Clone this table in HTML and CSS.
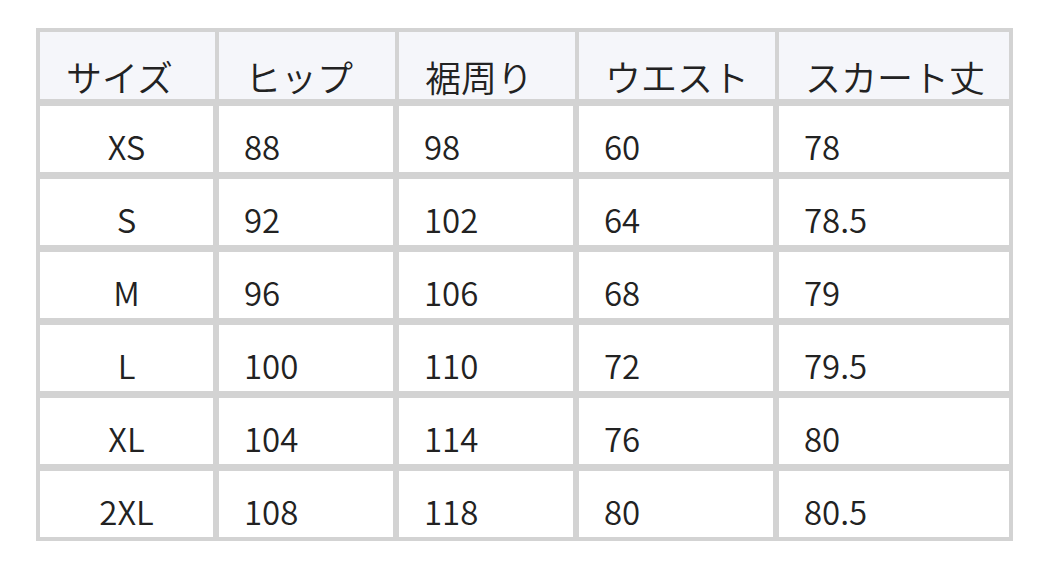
FILE: index.html
```html
<!DOCTYPE html>
<html lang="ja">
<head>
<meta charset="utf-8">
<link rel="stylesheet" href="styles.css">
</head>
<body>
<table class="size-table">
  <colgroup>
    <col class="c1"><col class="c2"><col class="c3"><col class="c4"><col class="c5">
  </colgroup>
  <thead>
    <tr><th>サイズ</th><th>ヒップ</th><th>裾周り</th><th>ウエスト</th><th>スカート丈</th></tr>
  </thead>
  <tbody>
    <tr><td class="size">XS</td><td>88</td><td>98</td><td>60</td><td>78</td></tr>
    <tr><td class="size">S</td><td>92</td><td>102</td><td>64</td><td>78.5</td></tr>
    <tr><td class="size">M</td><td>96</td><td>106</td><td>68</td><td>79</td></tr>
    <tr><td class="size">L</td><td>100</td><td>110</td><td>72</td><td>79.5</td></tr>
    <tr><td class="size">XL</td><td>104</td><td>114</td><td>76</td><td>80</td></tr>
    <tr><td class="size">2XL</td><td>108</td><td>118</td><td>80</td><td>80.5</td></tr>
  </tbody>
</table>
</body>
</html>
```

FILE: styles.css
```css
html, body {
  margin: 0;
  padding: 0;
  background: #ffffff;
}

body {
  padding: 28px 0 0 36px;
  font-family: "Noto Sans CJK JP", "Noto Sans", sans-serif;
  color: #222222;
}

.size-table {
  border-collapse: separate;
  border-spacing: 0;
  table-layout: fixed;
  width: 977px;
  border: 4px solid #d3d3d3;
}

.c1 { width: 179px; }
.c2 { width: 180px; }
.c3 { width: 180px; }
.c4 { width: 200px; }
.c5 { width: 230px; }

.size-table th,
.size-table td {
  box-sizing: border-box;
  padding: 0 0 6px 26px;
  text-align: left;
  vertical-align: bottom;
  font-weight: 350;
  line-height: 40px;
  white-space: nowrap;
}

.size-table th {
  height: 74px;
  background: #f5f6fa;
  border-bottom: 7px solid #d3d3d3;
  border-right: 4px solid #d3d3d3;
  font-size: 36px;
  padding-bottom: 3px;
}

.size-table th:last-child { border-right: 0; }

.size-table td {
  height: 73px;
  border-bottom: 7px solid #d3d3d3;
  border-right: 6px solid #d3d3d3;
  font-size: 33px;
  padding-left: 25px;
}

.size-table td:last-child { border-right: 0; }

.size-table tbody tr:last-child td {
  height: 66px;
  border-bottom: 0;
}

.size-table td.size {
  text-align: center;
  padding-left: 0;
}
```
